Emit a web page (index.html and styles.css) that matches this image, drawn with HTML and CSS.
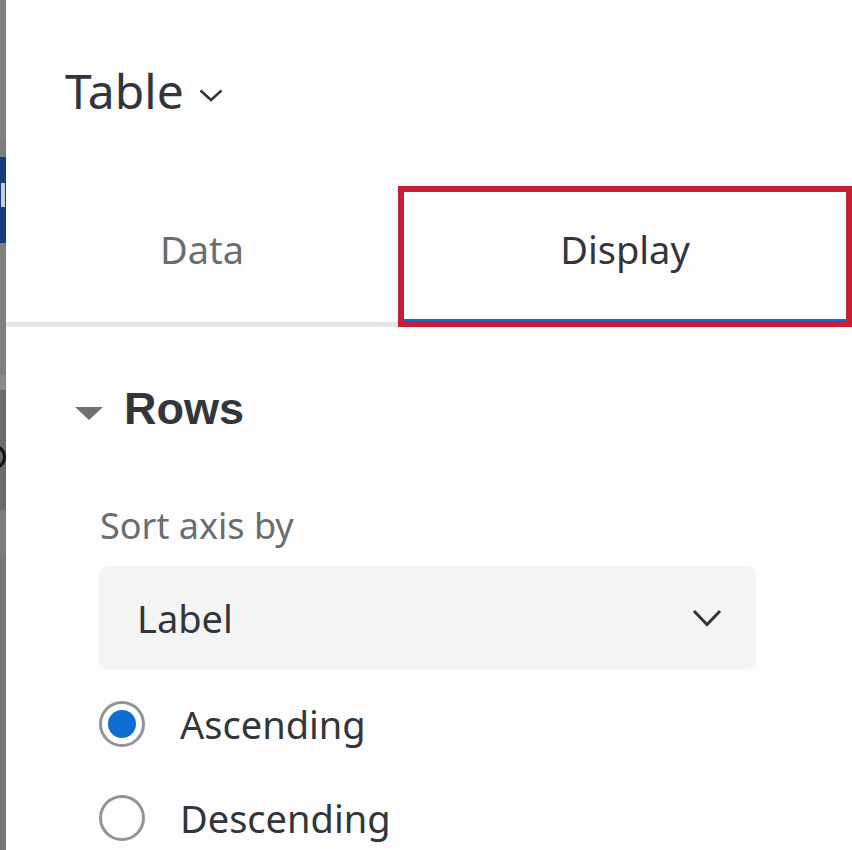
FILE: index.html
```html
<!DOCTYPE html>
<html lang="en">
<head>
    <meta charset="UTF-8">
    <meta name="viewport" content="width=device-width, initial-scale=1.0">
    <title>Table</title>
    <link rel="stylesheet" href="styles.css">
</head>
<body>
    <div class="page">
        <div class="edge">
            <div class="seg seg1"></div>
            <div class="seg seg2"></div>
            <div class="seg seg3"><span class="glyph"></span></div>
            <div class="seg seg4"></div>
            <div class="seg seg5"></div>
            <div class="seg seg6"><span class="curl"></span></div>
            <div class="seg seg7"></div>
            <div class="seg seg8"></div>
        </div>
        <div class="panel">
            <div class="head">
                <span class="title">Table</span>
                <svg class="title-caret" width="24" height="13" viewBox="0 0 24 13"><path d="M1.5 1.5 L12 11 L22.5 1.5" fill="none" stroke="#32363a" stroke-width="2.5"/></svg>
            </div>

            <div class="tabs">
                <div class="tab">Data</div>
                <div class="tab active">Display</div>
            </div>

            <div class="section">
                <div class="section-head">
                    <span class="tri"></span>
                    <span class="section-title">Rows</span>
                </div>

                <div class="field-label">Sort axis by</div>
                <div class="select">
                    <span>Label</span>
                    <svg class="select-caret" width="30" height="18" viewBox="0 0 30 18"><path d="M2 2 L15 15.5 L28 2" fill="none" stroke="#32363a" stroke-width="3"/></svg>
                </div>

                <div class="radios">
                    <div class="radio-row">
                        <span class="radio checked"></span>
                        <span>Ascending</span>
                    </div>
                    <div class="radio-row">
                        <span class="radio"></span>
                        <span>Descending</span>
                    </div>
                </div>
            </div>
        </div>
    </div>
</body>
</html>
```

FILE: styles.css
```css
* {
    margin: 0;
    padding: 0;
    box-sizing: border-box;
}

body {
    font-family: "Noto Sans", "Open Sans", sans-serif;
    color: #32363a;
    background: #fdfdfd;
    overflow: hidden;
}

.page {
    display: flex;
    height: 850px;
}

/* strip of the window behind the panel */
.edge {
    width: 6px;
    display: flex;
    flex-direction: column;
    overflow: hidden;
}
.seg {
    position: relative;
}
.seg1 { height: 138px; background: #808080; }
.seg2 { height: 19px; background: #7c7c7c; }
.seg3 { height: 86px; background: #143e76; }
.seg4 { height: 132px; background: #7f7f7f; }
.seg5 { height: 15px; background: #8a8a8a; }
.seg6 { height: 120px; background: #6b6b6b; overflow: hidden; }
.seg7 { height: 47px; background: #7c7c7c; }
.seg8 { flex: 1; background: #777; }
.glyph {
    position: absolute;
    left: 1px;
    top: 26px;
    width: 4px;
    height: 24px;
    background: #c9ced6;
}
.curl {
    position: absolute;
    left: -16px;
    top: 55px;
    width: 22px;
    height: 24px;
    border: 3px solid #111;
    border-radius: 50%;
}

.panel {
    flex: 1;
    background: #fdfdfd;
}

.head {
    height: 186px;
    padding: 61px 0 0 59px;
    display: flex;
    align-items: flex-start;
}
.title {
    font-size: 48px;
    line-height: 60px;
}
.title-caret {
    margin: 28px 0 0 15px;
}

.tabs {
    display: flex;
}
.tab {
    height: 141px;
    padding-top: 38px;
    line-height: 50px;
    font-size: 38px;
    text-align: center;
    color: #6a6d70;
    width: 392px;
    border-bottom: 5px solid #e5e5e5;
}
.tab.active {
    position: relative;
    flex: 1;
    color: #32363a;
    border-bottom: 8px solid #0b6dd1;
}
/* highlight frame round the active tab */
.tab.active::after {
    content: "";
    position: absolute;
    left: 0;
    top: 0;
    right: 0;
    bottom: -8px;
    border: 6px solid #c32133;
}

.section {
    padding: 57px 0 0 0;
}
.section-head {
    display: flex;
    align-items: flex-start;
    padding-left: 69px;
    height: 50px;
}
.tri {
    width: 0;
    height: 0;
    margin-top: 23px;
    border-left: 14px solid transparent;
    border-right: 14px solid transparent;
    border-top: 13px solid #6f6f6f;
}
.section-title {
    margin-left: 21px;
    font-family: "Liberation Sans", Arial, sans-serif;
    font-size: 45px;
    font-weight: 700;
    line-height: 50px;
}

.field-label {
    margin: 70px 0 0 94px;
    font-size: 36px;
    line-height: 44px;
    color: #6a6d70;
}

.select {
    margin: 18px 0 0 93px;
    width: 657px;
    height: 103px;
    border-radius: 9px;
    background: #f4f4f4;
    display: flex;
    align-items: center;
    justify-content: space-between;
    padding: 0 34px 0 38px;
    font-size: 38px;
}

.radios {
    margin: 8px 0 0 93px;
}
.radio-row {
    height: 94px;
    display: flex;
    align-items: center;
    font-size: 38px;
    line-height: 46px;
}
.radio {
    width: 46px;
    height: 46px;
    border-radius: 50%;
    border: 3px solid #8d949b;
    margin-right: 35px;
    display: flex;
    align-items: center;
    justify-content: center;
}
.radio.checked::before {
    content: "";
    width: 28px;
    height: 28px;
    border-radius: 50%;
    background: #0f6cd3;
}
```
